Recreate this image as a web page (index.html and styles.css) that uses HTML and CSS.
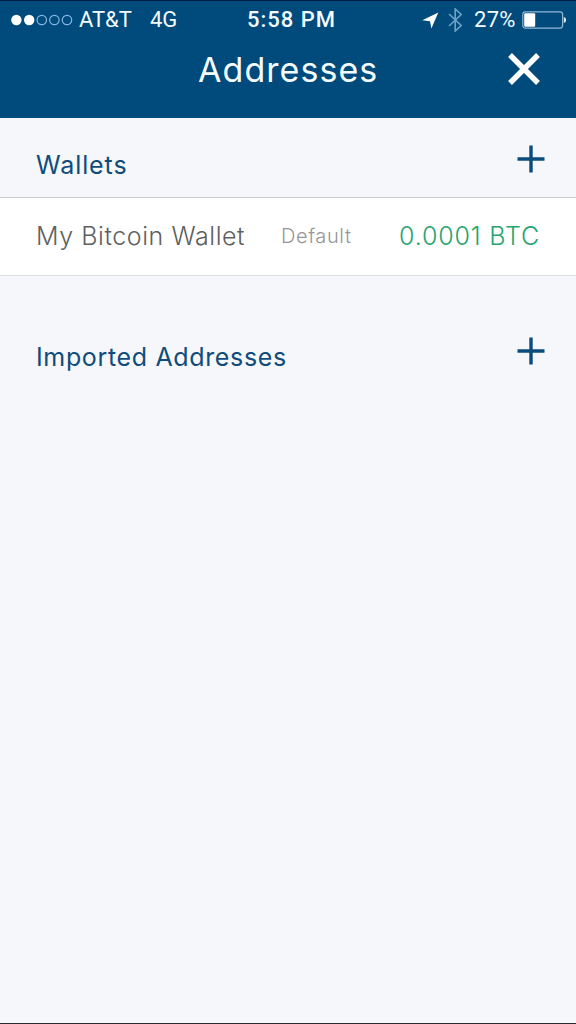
FILE: index.html
```html
<!DOCTYPE html>
<html lang="en">
<head>
<meta charset="utf-8">
<title>Addresses</title>
<link rel="stylesheet" href="styles.css">
</head>
<body>
<main class="screen">
  <header class="header">
    <div class="status">
      <div class="status-left">
        <svg class="signal" width="62" height="12" viewBox="0 0 62 12"><g fill="#fff"><circle cx="5.4" cy="6" r="5.2"/><circle cx="18.2" cy="6" r="5.2"/></g><g fill="none" stroke="#85b9e3" stroke-width="1.2"><circle cx="30.8" cy="6" r="4.7"/><circle cx="43.4" cy="6" r="4.7"/><circle cx="56" cy="6" r="4.7"/></g></svg>
        <span class="carrier">AT&amp;T</span>
        <span class="network">4G</span>
      </div>
      <span class="time">5:58 PM</span>
      <div class="status-right">
        <svg class="location" width="17" height="17" viewBox="0 0 17 17"><path d="M16.3.5 9.4 16.5 8 9.3.3 8.2Z" fill="#fff"/></svg>
        <svg class="bluetooth" width="15" height="24" viewBox="0 0 15 24"><path d="m1 6 12.2 11.5L7.2 23V1l6 5.5L1 18" fill="none" stroke="#6ea3c8" stroke-width="1.6"/></svg>
        <span class="percent">27%</span>
        <svg class="battery" width="45" height="18" viewBox="0 0 45 18"><rect x=".8" y=".9" width="39.8" height="16.2" rx="2.5" fill="none" stroke="#91b8d4" stroke-width="1.2"/><rect x="2.2" y="2.3" width="11" height="13.4" rx="1" fill="#fff"/><path d="M41.8 6c3 .5 3 5.5 0 6Z" fill="#d9edf8"/></svg>
      </div>
    </div>
    <div class="title-row">
      <h1 class="title">Addresses</h1>
      <svg class="close" width="34" height="34" viewBox="0 0 34 34"><path d="M3 3 31 31M31 3 3 31" stroke="#fff" stroke-width="5.4"/></svg>
    </div>
  </header>
  <section class="section-head">
    <h2 class="heading wallets">Wallets</h2>
    <svg class="plus" width="28" height="28" viewBox="0 0 28 28"><path d="M14 .5v27M.5 14h27" stroke="#0b4c7d" stroke-width="3.4"/></svg>
  </section>
  <div class="wallet-row">
    <span class="wallet-name">My Bitcoin Wallet</span>
    <span class="default">Default</span>
    <span class="amount">0.0001 BTC</span>
  </div>
  <section class="section-head imported-head">
    <h2 class="heading imported">Imported Addresses</h2>
    <svg class="plus" width="28" height="28" viewBox="0 0 28 28"><path d="M14 .5v27M.5 14h27" stroke="#0b4c7d" stroke-width="3.4"/></svg>
  </section>
</main>
</body>
</html>
```

FILE: styles.css
```css
* { box-sizing: border-box; }
body { margin: 0; font-family: Inter, "Open Sans", sans-serif; }
svg { display: block; flex: none; }
span, h1, h2 { white-space: nowrap; }
.screen { width: 576px; height: 1024px; background: #f5f7fa; border-bottom: 1px solid #292929; overflow: hidden; }
.header { height: 118px; background: #004a7c; border-top: 1px solid #061d45; color: #f4fcff; }
.status { height: 38px; display: grid; grid-template-columns: 247px 158px 171px; align-items: center; font-family: Roboto, sans-serif; font-size: 22px; line-height: 38px; }
.status-left, .status-right { display: flex; align-items: center; }
.signal { margin-left: 11px; }
.carrier { margin-left: 6px; width: 70px; letter-spacing: 0; }
.network { letter-spacing: 0; margin-left: 1px; }
.time { font-weight: 500; font-size: 22px; letter-spacing: 1px; }
.location { margin-left: 17px; }
.bluetooth { margin-left: 9px; }
.percent { margin-left: 11px; width: 48px; letter-spacing: .3px; }
.title-row { height: 62px; display: grid; grid-template-columns: 198px 309px 34px; align-items: center; }
.title { grid-column: 2; margin: 0; font-size: 34px; font-weight: 400; line-height: 62px; letter-spacing: 1.05px; }
.close { margin-top: -2px; }
.section-head { height: 79px; padding: 13px 31px 0 36px; display: flex; justify-content: space-between; align-items: flex-start; }
.heading { margin: 0; font-size: 25px; line-height: 68px; font-weight: 400; color: #0f4c7c; }
.wallets { letter-spacing: .9px; }
.imported { letter-spacing: .65px; }
.plus { margin-top: 14px; }
.wallet-row { height: 79px; display: grid; grid-template-columns: 245px 118px 1fr; align-items: center; padding-left: 36px; padding-bottom: 1px; background: #fff; border-top: 1px solid #c9ccd3; border-bottom: 1px solid #dadde2; }
.wallet-name { color: #606060; font-size: 25px; font-weight: 300; letter-spacing: .57px; }
.default { color: #969696; font-size: 20px; font-weight: 300; letter-spacing: .6px; }
.amount { color: #28a46f; font-size: 25px; font-weight: 300; letter-spacing: .85px; }
.imported-head { padding-top: 47px; height: 110px; }
```
